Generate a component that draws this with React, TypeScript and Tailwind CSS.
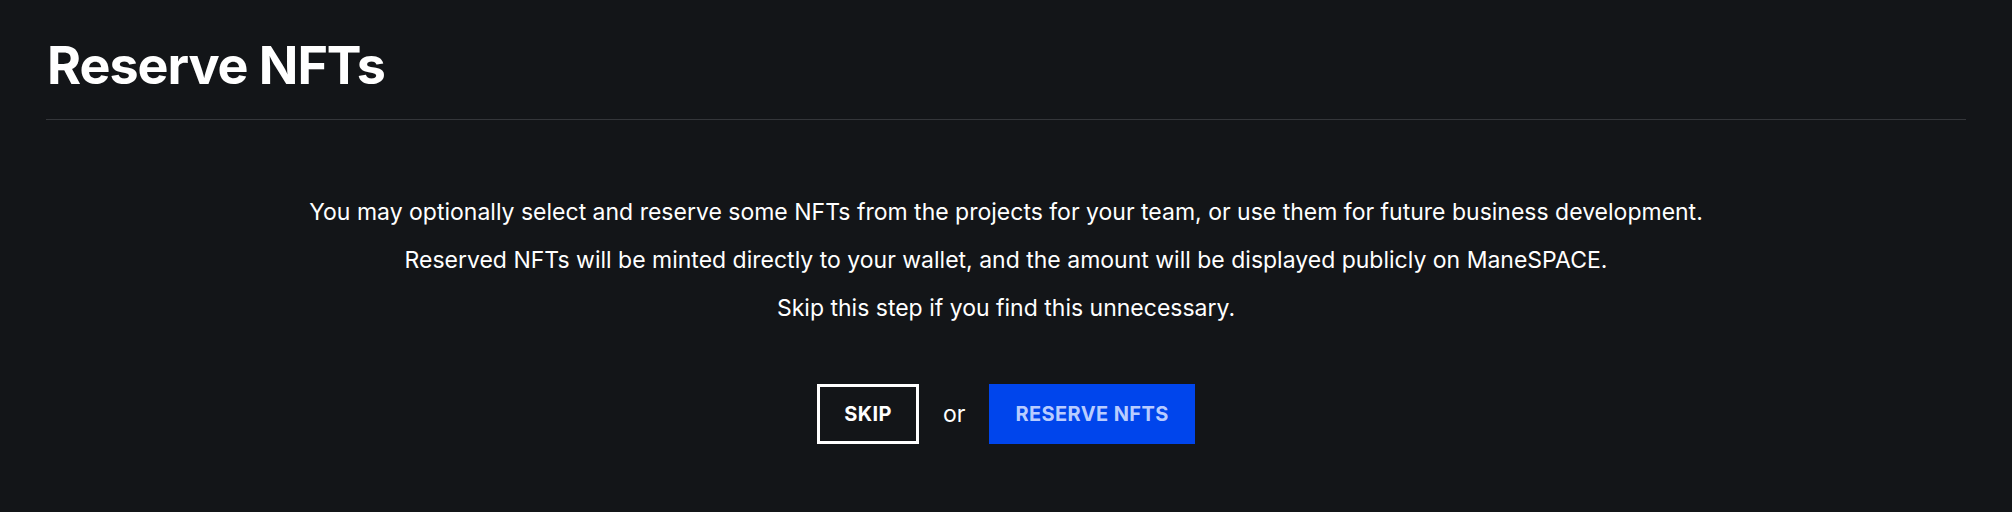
export default function App() {
  const lines = [
    'You may optionally select and reserve some NFTs from the projects for your team, or use them for future business development.',
    'Reserved NFTs will be minted directly to your wallet, and the amount will be displayed publicly on ManeSPACE.',
    'Skip this step if you find this unnecessary.',
  ];

  return (
    <div className="min-h-[512px] w-full bg-[#131518] px-[46px] font-['Inter','Noto_Sans',sans-serif] text-white">
      {/* Header */}
      <div className="border-b border-[#34363a] pt-[34px] pb-[22px]">
        <h1 className="pl-px text-[52px] leading-[63px] font-bold tracking-[-0.02em]">Reserve NFTs</h1>
      </div>

      {/* Body */}
      <div className="flex flex-col items-center pt-[68px]">
        {lines.map((line) => (
          <p key={line} className="text-center text-[23px] leading-[48px]">
            {line}
          </p>
        ))}

        <div className="mt-[52px] flex items-center">
          <button className="h-[60px] border-[3px] border-white px-[24px] text-[20px] font-bold tracking-[0.02em] text-white">
            SKIP
          </button>
          <span className="mx-6 text-[23px]">or</span>
          <button className="h-[60px] bg-[#0045ec] px-[26px] text-[20px] font-bold tracking-[0.02em] text-[#b8ccff]">
            RESERVE NFTS
          </button>
        </div>
      </div>
    </div>
  );
}
